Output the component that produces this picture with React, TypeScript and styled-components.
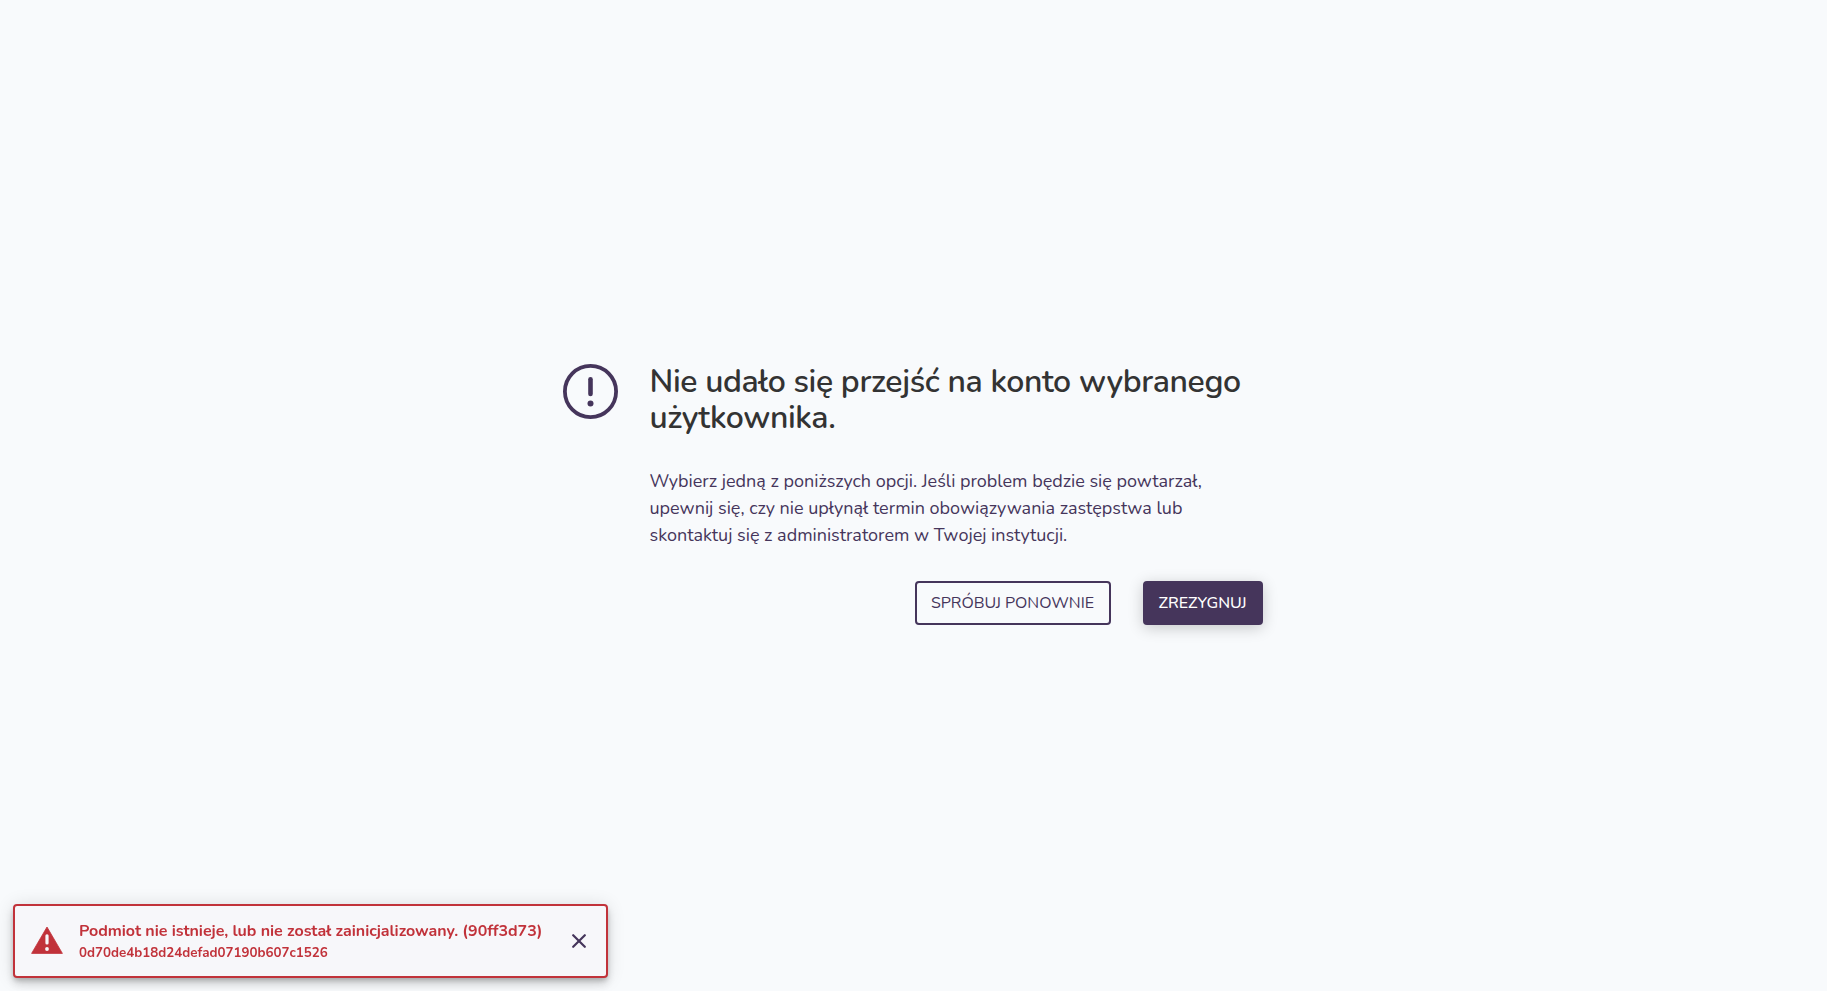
import React, { useState } from 'react';
import styled, { createGlobalStyle } from 'styled-components';

const GlobalStyle = createGlobalStyle`
  * {
    box-sizing: border-box;
  }

  body {
    margin: 0;
    background: #f8fafc;
    font-family: Nunito, "Open Sans", sans-serif;
    color: #45355b;
  }
`;

const Page = styled.main`
  display: flex;
  justify-content: center;
  align-items: flex-start;
  min-height: 100vh;
  padding-top: 364px;
`;

const ErrorBox = styled.section`
  display: flex;
  width: 700px;
  margin-right: 1px;
`;

const IconWrapper = styled.div`
  flex: none;
  width: 55px;
  height: 55px;
  margin-right: 31.5px;

  svg {
    display: block;
  }
`;

const Content = styled.div`
  flex: 1;
`;

const Title = styled.h1`
  margin: 0;
  font-size: 32px;
  font-weight: 600;
  line-height: 36px;
  letter-spacing: -0.37px;
  color: #333;
`;

const Description = styled.p`
  margin: 32px 0 0;
  font-size: 18px;
  line-height: 27px;
`;

const Actions = styled.div`
  display: flex;
  justify-content: flex-end;
  gap: 32px;
  margin-top: 32px;
`;

const Button = styled.button<{ $primary?: boolean }>`
  width: ${({ $primary }) => ($primary ? '120px' : '196px')};
  height: 44px;
  padding: 0 1px 0 0;
  border: 2px solid #45355b;
  border-radius: 4px;
  background: ${({ $primary }) => ($primary ? '#45355b' : 'transparent')};
  color: ${({ $primary }) => ($primary ? '#fff' : '#45355b')};
  box-shadow: ${({ $primary }) => ($primary ? '0 3px 15px rgba(0, 0, 0, 0.2)' : 'none')};
  font-family: inherit;
  font-size: 16px;
  font-weight: ${({ $primary }) => ($primary ? 500 : 400)};
  line-height: 24px;
  text-transform: uppercase;
  white-space: nowrap;
  cursor: pointer;
`;

const Toast = styled.div`
  position: fixed;
  left: 13px;
  bottom: 13px;
  display: flex;
  align-items: center;
  width: 595px;
  height: 74px;
  padding: 0 13px 0 16px;
  border: 2px solid #c1323a;
  border-radius: 4px;
  background: #f7f7fa;
  box-shadow: 0 3px 5px -1px rgba(0, 0, 0, 0.2), 0 6px 10px 0 rgba(0, 0, 0, 0.14), 0 1px 18px 0 rgba(0, 0, 0, 0.12);
  color: #c1323a;

  svg {
    display: block;
    flex: none;
  }
`;

const WarningIcon = styled.svg`
  margin-bottom: 2px;
`;

const ToastText = styled.div`
  flex: 1;
  margin-left: 16px;
  padding-top: 2px;
  white-space: nowrap;
`;

const ToastMessage = styled.div`
  font-size: 16px;
  font-weight: 700;
  line-height: 22px;
  letter-spacing: -0.03px;
`;

const ToastCode = styled.div`
  font-size: 13.33px;
  font-weight: 700;
  line-height: 23px;
`;

const CloseButton = styled.button`
  display: flex;
  align-items: center;
  justify-content: center;
  width: 28px;
  height: 28px;
  padding: 0;
  border: none;
  background: none;
  color: #45355b;
  cursor: pointer;
`;

const App = () => {
  const [toastOpen, setToastOpen] = useState(true);

  return (
    <>
      <GlobalStyle />
      <Page>
        <ErrorBox>
          <IconWrapper>
            <svg width="55" height="55" viewBox="0 0 55 55" fill="none">
              <circle cx="27.5" cy="27.5" r="25.6" stroke="#45355b" strokeWidth="3.8" />
              <path d="M27.5 15.3v14.6" stroke="#45355b" strokeWidth="4.6" strokeLinecap="round" />
              <circle cx="27.5" cy="39.5" r="3" fill="#45355b" />
            </svg>
          </IconWrapper>
          <Content>
            <Title>Nie udało się przejść na konto wybranego użytkownika.</Title>
            <Description>
              Wybierz jedną z poniższych opcji. Jeśli problem będzie się powtarzał,
              upewnij się, czy nie upłynął termin obowiązywania zastępstwa lub
              skontaktuj się z administratorem w Twojej instytucji.
            </Description>
            <Actions>
              <Button>Spróbuj ponownie</Button>
              <Button $primary>Zrezygnuj</Button>
            </Actions>
          </Content>
        </ErrorBox>
      </Page>
      {toastOpen && (
        <Toast>
          <WarningIcon width="32" height="28" viewBox="0 0 32 28">
            <path d="M16 1 31.4 27.4H.6z" fill="#c1323a" stroke="#c1323a" strokeWidth=".8" strokeLinejoin="round" />
            <rect x="14.4" y="8.2" width="3.2" height="10.4" rx="1.5" fill="#f7f7fa" />
            <circle cx="16" cy="23" r="1.9" fill="#f7f7fa" />
          </WarningIcon>
          <ToastText>
            <ToastMessage>Podmiot nie istnieje, lub nie został zainicjalizowany. (90ff3d73)</ToastMessage>
            <ToastCode>0d70de4b18d24defad07190b607c1526</ToastCode>
          </ToastText>
          <CloseButton onClick={() => setToastOpen(false)}>
            <svg width="14" height="14" viewBox="0 0 14 14" fill="none">
              <path d="M1.2 1.2l11.6 11.6M12.8 1.2L1.2 12.8" stroke="currentColor" strokeWidth="2.2" strokeLinecap="round" />
            </svg>
          </CloseButton>
        </Toast>
      )}
    </>
  );
};

export default App;
